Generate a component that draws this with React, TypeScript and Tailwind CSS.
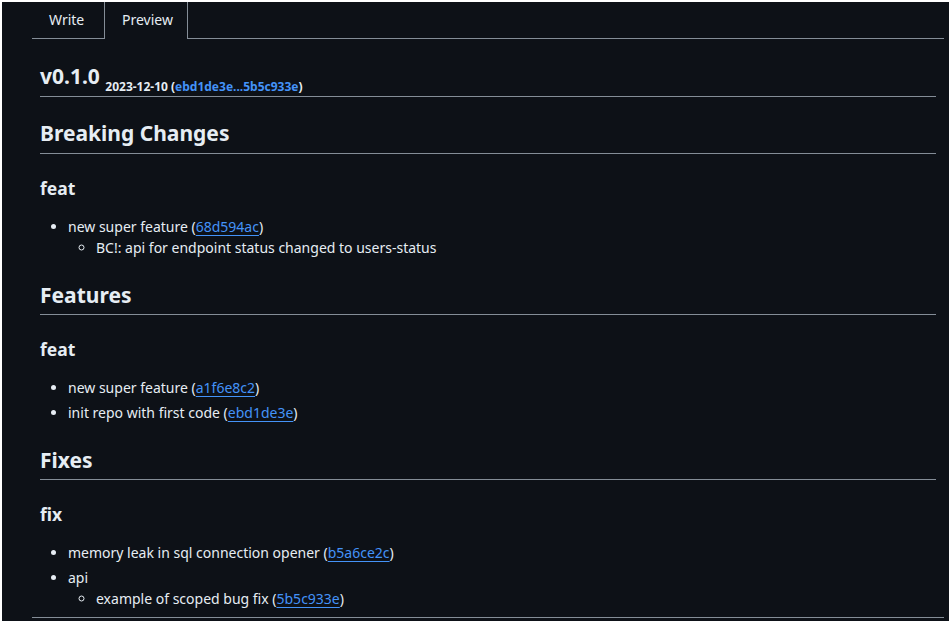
import React from "react";

const Link = ({ children }: { children: React.ReactNode }) => (
  <a className="text-[#4493f8] underline underline-offset-[3px] decoration-1" href="#">
    {children}
  </a>
);

export default function App() {
  return (
    <div
      className="w-[951px] h-[623px] bg-white p-[2px] overflow-hidden"
      style={{ fontFamily: '"Noto Sans", "DejaVu Sans", sans-serif' }}
    >
      <div className="h-full bg-[#0d1117] text-[#e6edf3] pl-[30px] pr-[5px] flex flex-col">
        <div className="flex h-[37px] text-[14px]">
          <div className="w-[72px] border-b border-[#848d97] flex items-center pl-[17px] pb-[1px]">
            Write
          </div>
          <div className="w-[84px] border-l border-r border-[#848d97] flex items-center pl-[17px] pb-[2px]">
            Preview
          </div>
          <div className="flex-1 border-b border-[#848d97]"></div>
        </div>
        <div className="flex-1 min-h-0 overflow-hidden border-b border-[#848d97] px-2 pt-6 pb-2 text-[14px] leading-[1.5]">
          <h2 className="text-[21px] leading-[1.25] font-bold pb-[6.5px] border-b border-[#848d97] mb-[15.5px]">
            v0.1.0{" "}
            <small className="text-[12px] leading-[0] align-[-7px] font-bold">
              2023-12-10 (<a className="text-[#4493f8]" href="#">ebd1de3e...5b5c933e</a>)
            </small>
          </h2>

          <h2 className="text-[21px] leading-[1.25] font-bold pb-[0.3em] border-b border-[#848d97] mt-[23.5px] mb-4">
            Breaking Changes
          </h2>
          <h3 className="text-[17.5px] leading-[1.25] font-bold mt-6 mb-4">feat</h3>
          <ul className="list-disc pl-[28px] mb-4">
            <li>
              new super feature (<Link>68d594ac</Link>)
              <ul className="list-[circle] pl-[28px]">
                <li>BC!: api for endpoint status changed to users-status</li>
              </ul>
            </li>
          </ul>

          <h2 className="text-[21px] leading-[1.25] font-bold pb-[0.3em] border-b border-[#848d97] mt-6 mb-4">
            Features
          </h2>
          <h3 className="text-[17.5px] leading-[1.25] font-bold mt-6 mb-4">feat</h3>
          <ul className="list-disc pl-[28px] mb-4">
            <li>
              new super feature (<Link>a1f6e8c2</Link>)
            </li>
            <li className="mt-[3.5px]">
              init repo with first code (<Link>ebd1de3e</Link>)
            </li>
          </ul>

          <h2 className="text-[21px] leading-[1.25] font-bold pb-[0.3em] border-b border-[#848d97] mt-6 mb-4">
            Fixes
          </h2>
          <h3 className="text-[17.5px] leading-[1.25] font-bold mt-6 mb-4">fix</h3>
          <ul className="list-disc pl-[28px]">
            <li>
              memory leak in sql connection opener (<Link>b5a6ce2c</Link>)
            </li>
            <li className="mt-[3.5px]">
              api
              <ul className="list-[circle] pl-[28px]">
                <li>
                  example of scoped bug fix (<Link>5b5c933e</Link>)
                </li>
              </ul>
            </li>
          </ul>
        </div>
        <div className="h-[3px]"></div>
      </div>
    </div>
  );
}
